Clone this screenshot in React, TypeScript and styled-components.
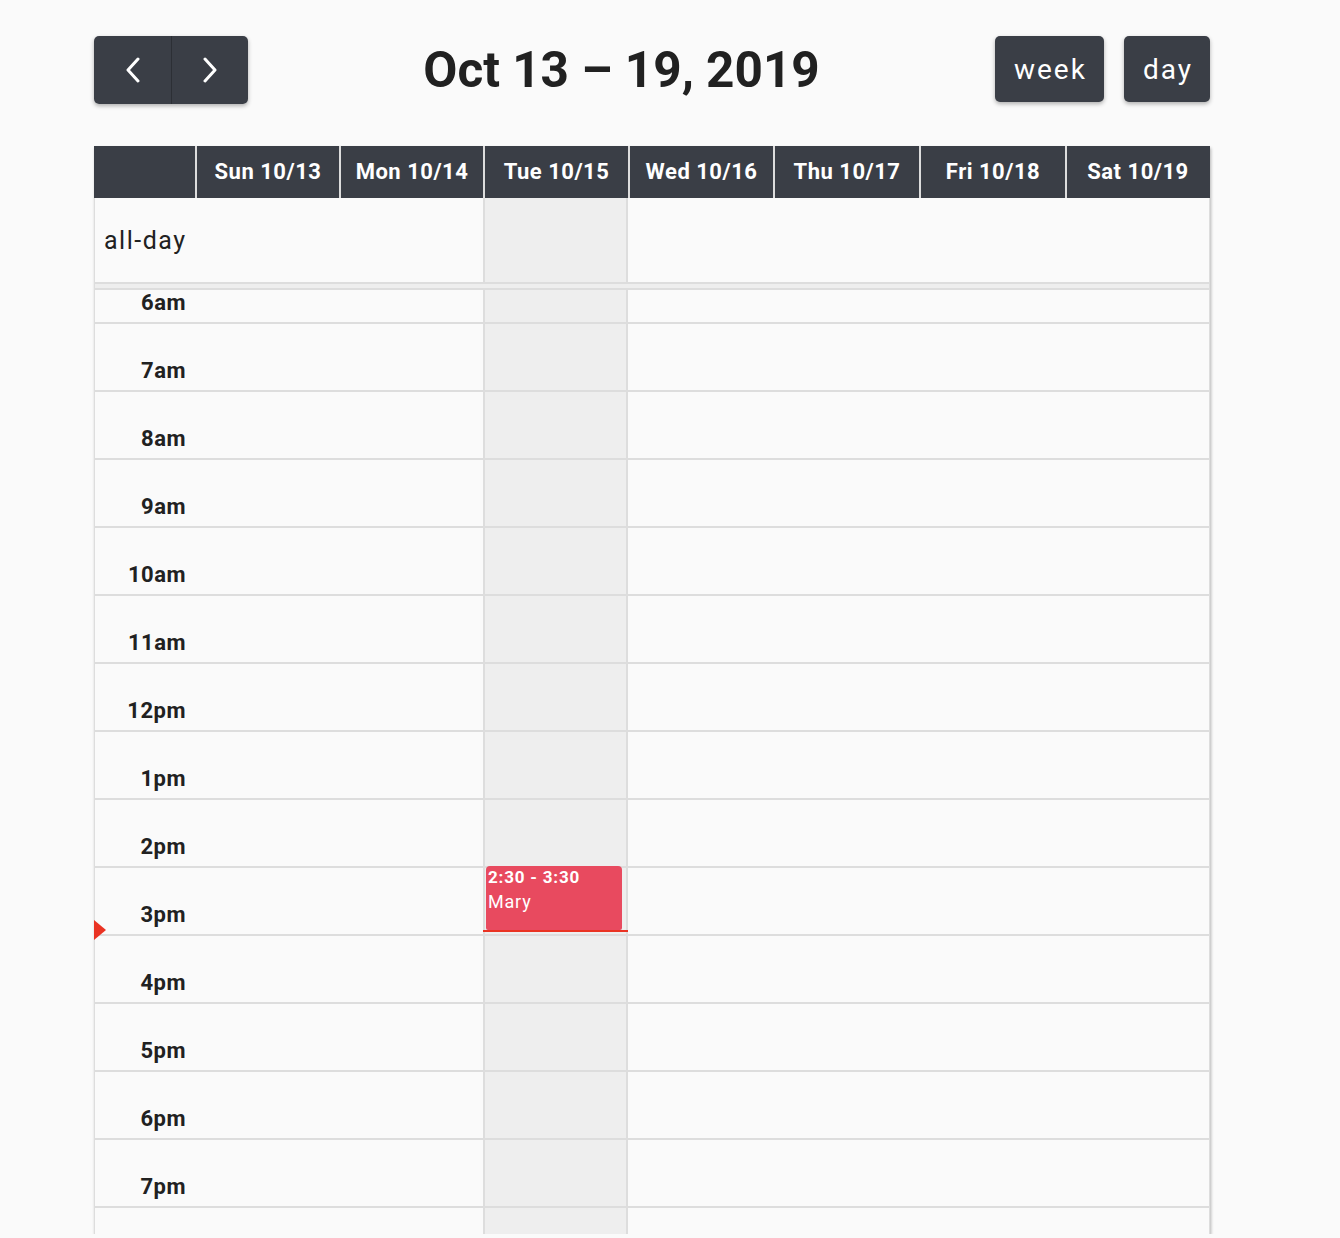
import React from "react";
import styled, { createGlobalStyle } from "styled-components";

const GlobalStyle = createGlobalStyle`
  html, body { margin: 0; padding: 0; background: #fafafa; }
  body { font-family: Roboto, "Liberation Sans", Arial, sans-serif; color: #212121; }
  * { box-sizing: border-box; }
`;

const DARK = "#3a3e46";
const LINE = "#dddddd";
const TODAY_BG = "#eeeeee";
const COLUMNS = "100px 144px 144px 145px 145px 146px 146px 1fr";

const Page = styled.div`
  padding: 36px 0 0 94px;
  width: 1210px;
`;

const Toolbar = styled.div`
  display: flex;
  justify-content: space-between;
  align-items: flex-start;
  height: 68px;
  margin-bottom: 42px;
`;

const NavGroup = styled.div`
  display: flex;
  border-radius: 5px;
  overflow: hidden;
  box-shadow: 0 2px 4px rgba(0, 0, 0, 0.3);
`;

const NavButton = styled.button<{ $divider?: boolean }>`
  width: 77px;
  height: 68px;
  border: none;
  padding: 0;
  background: ${DARK};
  display: flex;
  align-items: center;
  justify-content: center;
  border-left: ${(p) => (p.$divider ? "1px solid #2c2f35" : "none")};
  cursor: pointer;
`;

const Title = styled.h2`
  margin: 0;
  font-size: 49.5px;
  font-weight: 700;
  line-height: 68px;
  color: #212121;
  white-space: nowrap;
`;

const ViewGroup = styled.div`
  display: flex;
  gap: 20px;
`;

const ViewButton = styled.button`
  height: 66px;
  padding: 0 17px 0 19px;
  border: none;
  border-radius: 5px;
  background: ${DARK};
  color: #ffffff;
  font-family: Roboto, "Liberation Sans", Arial, sans-serif;
  font-size: 28px;
  font-weight: 400;
  letter-spacing: 2px;
  box-shadow: 0 2px 4px rgba(0, 0, 0, 0.3);
  cursor: pointer;
`;

const Calendar = styled.div`
  width: 1116px;
  box-shadow: 1px 2px 3px rgba(0, 0, 0, 0.28);
`;

const GridRow = styled.div<{ $h: number; $border?: boolean }>`
  display: grid;
  grid-template-columns: ${COLUMNS};
  height: ${(p) => p.$h}px;
  border-left: 1px solid ${LINE};
  border-right: 1px solid ${LINE};
  border-bottom: ${(p) => (p.$border ? `2px solid ${LINE}` : "none")};
`;

const HeaderRow = styled.div`
  display: grid;
  grid-template-columns: ${COLUMNS};
  height: 52px;
  background: ${DARK};
  border-left: 1px solid ${DARK};
  border-right: 1px solid ${DARK};
`;

const HeaderCell = styled.div<{ $axis?: boolean }>`
  display: flex;
  align-items: center;
  justify-content: center;
  padding-bottom: 2px;
  color: #ffffff;
  font-size: 22px;
  font-weight: 700;
  letter-spacing: 0.5px;
  border-left: ${(p) => (p.$axis ? "none" : `2px solid ${LINE}`)};
  white-space: nowrap;
`;

const AllDayLabel = styled.div`
  display: flex;
  align-items: center;
  padding-left: 9px;
  font-size: 25px;
  font-weight: 400;
  letter-spacing: 1.5px;
  color: #212121;
  white-space: nowrap;
`;

const DayCell = styled.div<{ $today?: boolean }>`
  position: relative;
  background: ${(p) => (p.$today ? TODAY_BG : "transparent")};
  border-left: ${(p) => (p.$today ? `2px solid ${LINE}` : "none")};
  border-right: ${(p) => (p.$today ? `2px solid ${LINE}` : "none")};
`;

const Divider = styled.div`
  height: 8px;
  background: ${TODAY_BG};
  border-top: 2px solid ${LINE};
  border-bottom: 2px solid ${LINE};
  border-left: 1px solid ${LINE};
  border-right: 1px solid ${LINE};
`;

const SlotLabel = styled.div`
  position: relative;
  display: flex;
  align-items: flex-end;
  justify-content: flex-end;
  padding: 0 9px 7px 0;
  font-size: 22px;
  font-weight: 700;
  letter-spacing: 0.5px;
  line-height: 24px;
  color: #212121;
`;

const NowArrow = styled.div`
  position: absolute;
  left: -1px;
  top: 52px;
  width: 0;
  height: 0;
  border-top: 10px solid transparent;
  border-bottom: 10px solid transparent;
  border-left: 12px solid #ea3323;
`;

const NowLine = styled.div`
  position: absolute;
  left: -2px;
  right: -2px;
  top: 62px;
  height: 2px;
  background: #ea3323;
  z-index: 2;
`;

const Event = styled.div`
  position: absolute;
  top: -2px;
  left: 1px;
  right: 4px;
  height: 64px;
  background: #e84a5f;
  border-radius: 4px 4px 2px 2px;
  color: #ffffff;
  padding: 0 2px;
  z-index: 1;
`;

const EventTime = styled.div`
  font-size: 17px;
  font-weight: 700;
  letter-spacing: 0.8px;
  line-height: 22px;
`;

const EventTitle = styled.div`
  font-size: 18px;
  font-weight: 400;
  letter-spacing: 0.8px;
  line-height: 28px;
`;

const Chevron = ({ dir }: { dir: "left" | "right" }) => (
  <svg width="16" height="26" viewBox="0 0 16 26" fill="none">
    <polyline
      points={dir === "left" ? "13,2 3,13 13,24" : "3,2 13,13 3,24"}
      stroke="#ffffff"
      strokeWidth="3"
      strokeLinecap="round"
      strokeLinejoin="round"
    />
  </svg>
);

const days = [
  "Sun 10/13",
  "Mon 10/14",
  "Tue 10/15",
  "Wed 10/16",
  "Thu 10/17",
  "Fri 10/18",
  "Sat 10/19",
];
const TODAY = 2;

const hours = [
  "6am", "7am", "8am", "9am", "10am", "11am", "12pm",
  "1pm", "2pm", "3pm", "4pm", "5pm", "6pm", "7pm",
];

export default function App() {
  return (
    <>
      <GlobalStyle />
      <Page>
        <Toolbar>
          <NavGroup>
            <NavButton aria-label="prev">
              <Chevron dir="left" />
            </NavButton>
            <NavButton $divider aria-label="next">
              <Chevron dir="right" />
            </NavButton>
          </NavGroup>
          <Title>Oct 13 – 19, 2019</Title>
          <ViewGroup>
            <ViewButton>week</ViewButton>
            <ViewButton>day</ViewButton>
          </ViewGroup>
        </Toolbar>

        <Calendar>
          <HeaderRow>
            <HeaderCell $axis />
            {days.map((d) => (
              <HeaderCell key={d}>{d}</HeaderCell>
            ))}
          </HeaderRow>

          <GridRow $h={84}>
            <AllDayLabel>all-day</AllDayLabel>
            {days.map((d, i) => (
              <DayCell key={d} $today={i === TODAY} />
            ))}
          </GridRow>

          <Divider />

          {hours.map((h, r) => (
            <GridRow key={h} $h={r === 0 ? 34 : 68} $border>
              <SlotLabel>
                {h}
                {h === "3pm" && <NowArrow />}
              </SlotLabel>
              {days.map((d, i) => (
                <DayCell key={d} $today={i === TODAY}>
                  {h === "3pm" && i === TODAY && (
                    <>
                      <Event>
                        <EventTime>2:30 - 3:30</EventTime>
                        <EventTitle>Mary</EventTitle>
                      </Event>
                      <NowLine />
                    </>
                  )}
                </DayCell>
              ))}
            </GridRow>
          ))}

          <GridRow $h={26}>
            <SlotLabel />
            {days.map((d, i) => (
              <DayCell key={d} $today={i === TODAY} />
            ))}
          </GridRow>
        </Calendar>
      </Page>
    </>
  );
}
